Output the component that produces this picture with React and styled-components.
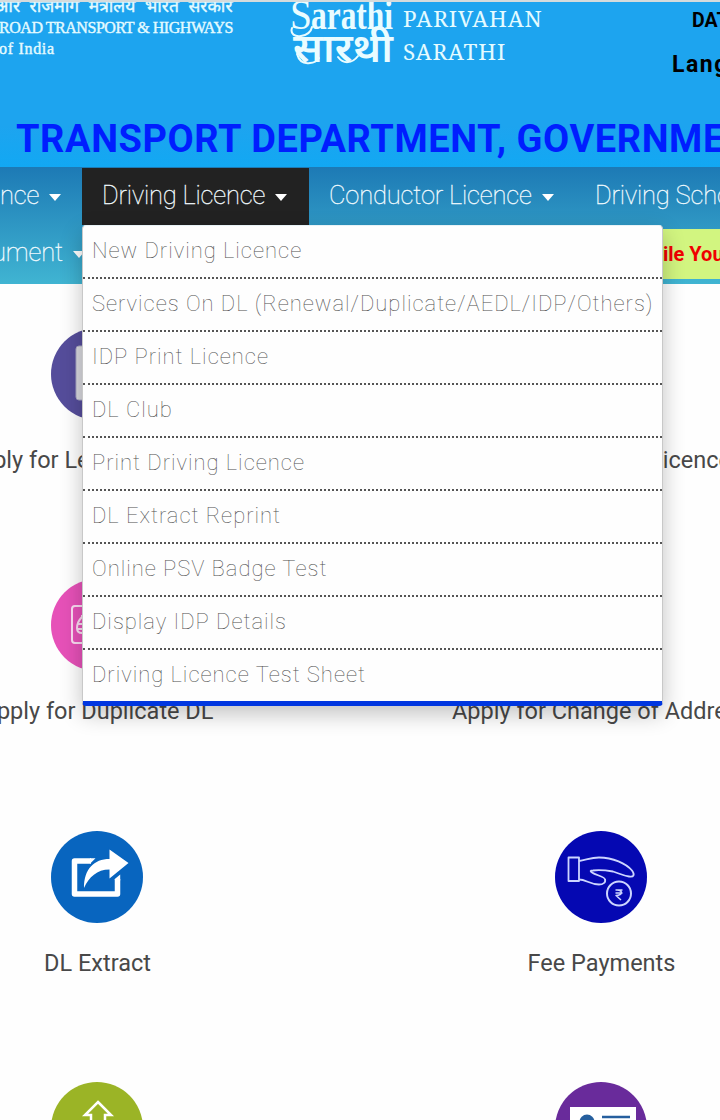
import React from "react";
import styled, { createGlobalStyle } from "styled-components";

const GlobalStyle = createGlobalStyle`
    * {
        box-sizing: border-box;
    }
    body {
        margin: 0;
        background: #fefefe;
        font-family: Roboto, "Liberation Sans", sans-serif;
        overflow: hidden;
    }
`;

const Page = styled.div`
    position: relative;
    width: 720px;
    height: 1120px;
    overflow: hidden;
`;

const Header = styled.header`
    height: 167px;
    border-top: 2px solid #d5dbdc;
    background: linear-gradient(#1da4ef 0, #1da4ef 75%, #12a8f3 100%);
    overflow: hidden;
    white-space: nowrap;
`;

const Brand = styled.div`
    display: flex;
    height: 110px;
`;

const Ministry = styled.div`
    flex: none;
    width: 290px;
    color: #e4fbff;
    font-family: "Liberation Serif", serif;
    -webkit-text-stroke: 0.4px #e4fbff;
`;

const Hindi = styled.div`
    height: 15px;
    margin-left: -5px;
    font-family: "Noto Sans Devanagari", "Noto Sans", sans-serif;
    font-size: 17.5px;
    line-height: 12px;
    word-spacing: 5px;
`;

const MinistryLine = styled.div`
    height: 21px;
    margin-left: -1px;
    font-size: ${(props) => props.$size}px;
    line-height: 22px;
    letter-spacing: ${(props) => props.$spacing || 0}px;
`;

const Logo = styled.svg`
    width: 113px;
    height: 66px;
    flex: none;
`;

const Product = styled.div`
    flex: none;
    width: 269px;
    color: #e4fbff;
    font-family: "Noto Serif", "Liberation Serif", serif;
    font-size: 22.5px;
    line-height: 33px;
    letter-spacing: 0.9px;
`;

const Tools = styled.div`
    flex: none;
    color: #000;
    font-weight: 700;
`;

const DateLabel = styled.div`
    margin-left: 20px;
    font-size: 19.5px;
    line-height: 38px;
`;

const Language = styled.div`
    font-size: 23px;
    line-height: 49px;
    letter-spacing: 1.5px;
`;

const Title = styled.h1`
    margin: 0 0 0 16px;
    color: #001eff;
    font-size: 38px;
    line-height: 54px;
    font-weight: 700;
    letter-spacing: 0.57px;
`;

const Nav = styled.nav`
    height: 117px;
    background: linear-gradient(#1d7ab5, #40b4d2);
    white-space: nowrap;
    overflow: hidden;
`;

const NavRow = styled.div`
    display: flex;
    height: 58px;
    padding-top: ${(props) => (props.$second ? 0 : 1)}px;
    margin-left: ${(props) => (props.$second ? -8 : 0)}px;
`;

const NavItem = styled.div`
    display: flex;
    flex: none;
    align-items: center;
    gap: 10px;
    width: ${(props) => props.$width}px;
    height: 57px;
    padding-left: ${(props) => (props.$cut ? 0 : 20)}px;
    padding-bottom: 4px;
    background: ${(props) => (props.$active ? "#222" : "transparent")};
    color: #f2fbff;
    font-size: 25.5px;
    font-weight: 100;
    letter-spacing: -0.18px;
    -webkit-text-stroke: 0.3px #f2fbff;
`;

const Caret = styled.i`
    margin-top: 5px;
    border: 6.5px solid transparent;
    border-top: 7px solid #fff;
    border-bottom: 0;
`;

const Notice = styled.div`
    flex: none;
    width: 160px;
    height: 50px;
    margin: 4px 0 0 472px;
    padding-left: 103px;
    background: #d2f580;
    color: #f00000;
    font-size: 20px;
    font-weight: 700;
    line-height: 50px;
`;

const Menu = styled.ul`
    position: absolute;
    top: 225px;
    left: 82px;
    width: 581px;
    margin: 0;
    padding: 0;
    border: 1px solid #c8c8c8;
    border-top-color: #e8f2f6;
    border-bottom: 5px solid #0036e0;
    border-radius: 4px;
    background: #fefefe;
    box-shadow: 0 8px 22px rgba(0, 0, 0, 0.24);
    list-style: none;
`;

const MenuItem = styled.li`
    height: 53px;
    padding-left: 9px;
    border-bottom: 2px dotted #555;
    color: #505050;
    font-size: 22px;
    font-weight: 100;
    line-height: 50px;
    letter-spacing: 0.98px;
    white-space: nowrap;

    &:last-child {
        height: 51px;
        border-bottom: 0;
    }
`;

const Services = styled.main`
    display: grid;
    grid-template-columns: 504px 504px;
    grid-auto-rows: 251.4px;
    margin: 0 0 0 -154.5px;
    padding-top: 44px;
`;

const Service = styled.div`
    display: flex;
    flex-direction: column;
    align-items: center;
    color: #484848;
    font-size: 23.5px;
    white-space: nowrap;
`;

const Icon = styled.svg`
    width: 92px;
    height: 92px;
    margin: 0 1px 26px 0;
`;

const navItems = [
    { label: "nce", width: 82, cut: true },
    { label: "Driving Licence", width: 227, active: true },
    { label: "Conductor Licence", width: 266 },
    { label: "Driving School", width: 220 },
];

const menuItems = [
    "New Driving Licence",
    "Services On DL (Renewal/Duplicate/AEDL/IDP/Others)",
    "IDP Print Licence",
    "DL Club",
    "Print Driving Licence",
    "DL Extract Reprint",
    "Online PSV Badge Test",
    "Display IDP Details",
    "Driving Licence Test Sheet",
];

const services = [
    {
        label: "Apply for Learner Licence",
        color: "#554d9b",
        art: <rect x="25" y="18" width="44" height="54" rx="3" fill="#d8d8de" stroke="#aaa9c4" />,
    },
    { label: "Apply for Driving Licence", color: "#554d9b" },
    {
        label: "Apply for Duplicate DL",
        color: "#e651b8",
        art: (
            <g fill="none" stroke="#fbdcf2" strokeWidth="2">
                <rect x="21" y="27" width="52" height="37" rx="3" />
                <path d="M31 38q-5 5-5 11 0 5 5 5M27 45h8M27 50h8M31 38v-2" />
            </g>
        ),
    },
    { label: "Apply for Change of Address", color: "#2f8f8b" },
    {
        label: "DL Extract",
        color: "#0865bf",
        art: (
            <g>
                <path d="M40 30H23.5v33h43V48" fill="none" stroke="#fff" strokeWidth="5.5" strokeLinejoin="round" />
                <path d="M39 27.3h5.5L39 32.7zM63.8 49v-1l5.4-4.5v6z" fill="#fff" />
                <path
                    d="M33 57C33 38 43 28 58.5 28v-9.5L77.5 32 58.5 47.5v-9C46 38.5 38 46 33 57z"
                    fill="#fff"
                    stroke="#0865bf"
                    strokeWidth="2"
                    paintOrder="stroke"
                />
            </g>
        ),
    },
    {
        label: "Fee Payments",
        color: "#0508b2",
        art: (
            <g fill="none" stroke="#cdd5ff" strokeWidth="1.8" strokeLinejoin="round">
                <path d="M13.5 26.5H24V50H13.5z" />
                <path d="M24 30c7-1 12-3.5 20-3.5 14 0 27 6 33 13 3 4 2 7-3 6-6-1-10-3-16-5-6-1-12-2-20-1-3 0-3 1-1 2 4 3 13 4 13 7 1 3-2 5-6 5-9 0-13-5-20-5" />
                <circle cx="64" cy="62.5" r="12" strokeWidth="2" />
                <path d="M60.5 59h7M60.5 62h7M62 59c6 0 6 5-1 5.500l5 4.500" strokeWidth="1.5" />
            </g>
        ),
    },
    {
        label: "Upload Document",
        color: "#9bb426",
        art: <path d="M47 20l13 13h-6v28H40V33h-6z" fill="none" stroke="#fff" strokeWidth="2.5" />,
    },
    {
        label: "Application Status",
        color: "#692b9b",
        art: (
            <g>
                <rect x="15" y="25" width="66" height="45" fill="#fff" />
                <circle cx="32" cy="40" r="7.5" fill="#265f9e" />
                <path d="M47 35h28M47 43h28" stroke="#265f9e" strokeWidth="2.5" />
            </g>
        ),
    },
];

function SarathiLogo() {
    return (
        <Logo viewBox="290 2 113 66">
            <g fill="#eafcff" fontFamily="Liberation Serif, serif">
                <text x="290" y="29" fontSize="42" textLength="22" lengthAdjust="spacingAndGlyphs">S</text>
                <text x="311" y="29" fontSize="43" fontWeight="bold" textLength="82" lengthAdjust="spacingAndGlyphs">arathi</text>
                <text
                    x="293"
                    y="62"
                    fontSize="40"
                    fontWeight="600"
                    fontFamily="Noto Sans Devanagari, Noto Sans, sans-serif"
                    textLength="100"
                    lengthAdjust="spacingAndGlyphs"
                >
                    सारथी
                </text>
            </g>
            {/* swashes that tie the two words together */}
            <g fill="none" stroke="#eafcff" strokeWidth="2" strokeLinecap="round">
                <path d="M292 28c-2 6 3 9 9 8 6-1 10-4 11-9" />
                <path d="M297 54c2 7 7 10 13 9 4 0 7-2 9-5M338 57c5 7 14 7 20-1" />
            </g>
        </Logo>
    );
}

function App() {
    return (
        <Page>
            <GlobalStyle />
            <Header>
                <Brand>
                    <Ministry>
                        <Hindi>और राजमार्ग मंत्रालय भारत सरकार</Hindi>
                        <MinistryLine $size={16} $spacing={-0.46}>ROAD TRANSPORT &amp; HIGHWAYS</MinistryLine>
                        <MinistryLine $size={16} $spacing={0.7}>of India</MinistryLine>
                    </Ministry>
                    <SarathiLogo />
                    <Product>
                        PARIVAHAN
                        <br />
                        SARATHI
                    </Product>
                    <Tools>
                        <DateLabel>DATE</DateLabel>
                        <Language>Language</Language>
                    </Tools>
                </Brand>
                <Title>TRANSPORT DEPARTMENT, GOVERNMENT</Title>
            </Header>
            <Nav>
                <NavRow>
                    {navItems.map((item) => (
                        <NavItem key={item.label} $width={item.width} $active={item.active} $cut={item.cut}>
                            {item.label}
                            <Caret />
                        </NavItem>
                    ))}
                </NavRow>
                <NavRow $second>
                    <NavItem $width={96} $cut>
                        ument
                        <Caret />
                    </NavItem>
                    <Notice>ile Your</Notice>
                </NavRow>
            </Nav>
            <Services>
                {services.map((service) => (
                    <Service key={service.label}>
                        <Icon viewBox="0 0 92 92">
                            <circle cx="46" cy="46" r="46" fill={service.color} />
                            {service.art}
                        </Icon>
                        {service.label}
                    </Service>
                ))}
            </Services>
            <Menu>
                {menuItems.map((label) => (
                    <MenuItem key={label}>{label}</MenuItem>
                ))}
            </Menu>
        </Page>
    );
}

export default App;
